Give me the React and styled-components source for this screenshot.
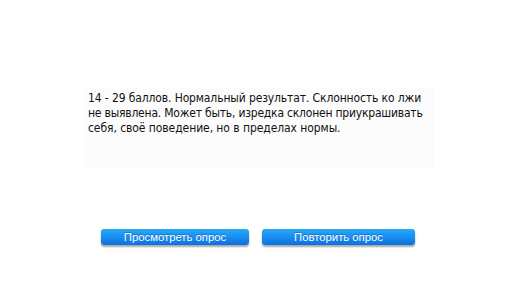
import React from "react";
import styled, { createGlobalStyle } from "styled-components";

const Global = createGlobalStyle`
  html, body {
    margin: 0;
    padding: 0;
    background: #ffffff;
  }
  #root {
    width: 512px;
    height: 288px;
  }
`;

const Screen = styled.div`
  width: 512px;
  height: 288px;
  display: flex;
  flex-direction: column;
  align-items: center;
  padding-top: 88px;
  box-sizing: border-box;
`;

const Panel = styled.div`
  width: 351px;
  height: 79px;
  margin-left: 5px;
  background: #fcfcfc;
  padding: 3px 5px 0 5px;
  box-sizing: border-box;
  font-family: "DejaVu Sans Condensed", "DejaVu Sans", Verdana, sans-serif;
  font-size: 12px;
  line-height: 14.8px;
  color: #111111;
`;

const Line = styled.div`
  white-space: nowrap;
  letter-spacing: ${(p) => p.$ls || 0}px;
`;

const Actions = styled.div`
  display: flex;
  gap: 13px;
  margin-top: 62px;
  margin-left: 4px;
`;

const Button = styled.button`
  width: ${(p) => p.$w}px;
  height: 16px;
  padding: 0;
  border: none;
  border-radius: 3px;
  background: linear-gradient(to bottom, #27a9f5 0%, #1a8ef0 50%, #0b70e0 100%);
  box-shadow: 0 2px 2px rgba(0, 0, 0, 0.35);
  color: #ffffff;
  font-family: "Liberation Sans", Arial, sans-serif;
  font-size: 11.3px;
  line-height: 16px;
  text-shadow: 0 -1px 0 rgba(0, 60, 140, 0.4);
  cursor: pointer;
`;

export default function App() {
  return (
    <>
      <Global />
      <Screen>
        <Panel>
          <Line $ls={-0.12}>14 - 29 баллов. Нормальный результат. Склонность ко лжи</Line>
          <Line $ls={-0.21}>не выявлена. Может быть, изредка склонен приукрашивать</Line>
          <Line $ls={-0.07}>себя, своё поведение, но в пределах нормы.</Line>
        </Panel>
        <Actions>
          <Button $w={148}>Просмотреть опрос</Button>
          <Button $w={153}>Повторить опрос</Button>
        </Actions>
      </Screen>
    </>
  );
}
